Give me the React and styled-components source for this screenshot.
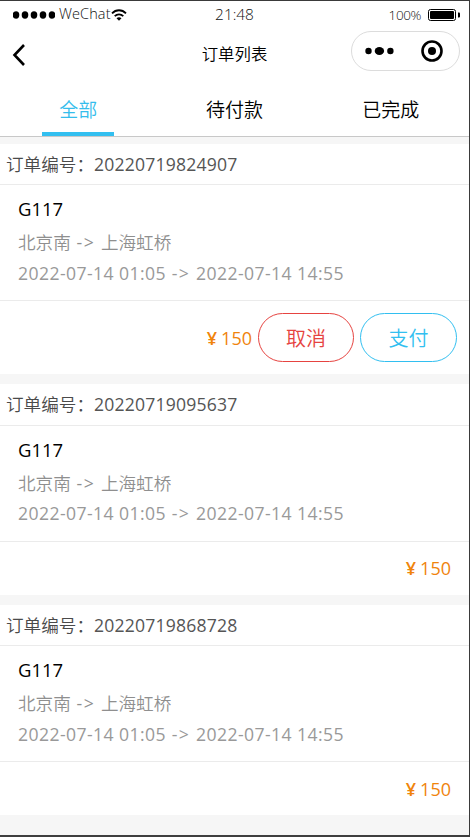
import React, { useState } from 'react';
import styled, { createGlobalStyle } from 'styled-components';

const GlobalStyle = createGlobalStyle`
  * {
    box-sizing: border-box;
  }

  body {
    margin: 0;
    background: #fff;
    font-family: 'Open Sans', 'Noto Sans CJK SC', sans-serif;
  }
`;

const Phone = styled.div`
  display: flex;
  flex-direction: column;
  width: 470px;
  height: 837px;
  overflow: hidden;
  background: #f6f6f6;
  border-top: 1px solid #3a3a3a;
  border-right: 1px solid #3a3a3a;
  border-bottom: 2px solid #3e3e3e;
`;

const StatusBar = styled.div`
  display: grid;
  grid-template-columns: 1fr auto 1fr;
  align-items: center;
  height: 28px;
  padding: 0 9px 0 13px;
  background: #fff;
  color: #111;
  font-weight: 300;
  font-size: 15.4px;
  line-height: 28px;
`;

const Carrier = styled.div`
  display: flex;
  align-items: center;
`;

const CarrierName = styled.span`
  margin: -2px 0 0 4px;
  font-size: 14.5px;
  letter-spacing: 0.1px;
`;

const Time = styled.span`
  margin: -1px 4px 0 0;
`;

const Battery = styled.div`
  display: flex;
  align-items: center;
  justify-content: flex-end;
  gap: 7px;
  font-size: 13.5px;
  letter-spacing: -0.4px;
`;

const NavBar = styled.div`
  display: grid;
  grid-template-columns: 1fr auto 1fr;
  align-items: center;
  height: 53px;
  padding: 0 9px 9px 12px;
  background: #fff;
`;

const NavTitle = styled.div`
  margin: 5px 3px 0 0;
  color: #000;
  font-size: 16.4px;
  font-weight: 350;
  line-height: 24px;
`;

const BackButton = styled.button`
  width: 14px;
  height: 24px;
  margin-top: 8px;
  padding: 0;
  border: none;
  background: none;

  svg {
    display: block;
  }
`;

const Capsule = styled.div`
  display: flex;
  align-items: center;
  justify-content: space-between;
  justify-self: end;
  width: 109px;
  height: 40px;
  padding: 0 16px 0 13px;
  border: 1px solid #dcdcdc;
  border-radius: 20px;
`;

const Tabs = styled.div`
  display: flex;
  flex: none;
  height: 55px;
  background: #fff;
  border-bottom: 1px solid #c8c8c8;
`;

const Tab = styled.div`
  display: flex;
  flex: 1;
  justify-content: center;
  color: ${({ $active }) => ($active ? '#35bdec' : '#000')};
  font-size: 19px;
  font-weight: 350;
  line-height: 56px;
  cursor: pointer;

  span {
    height: 54px;
    padding: 0 17px;
    border-bottom: 4px solid ${({ $active }) => ($active ? '#32bff0' : 'transparent')};
  }
`;

const OrderList = styled.div`
  display: flex;
  flex-direction: column;
  gap: 10px;
  padding-top: 6.9px;
`;

const Card = styled.div`
  background: #fff;
`;

const CardHeader = styled.div`
  display: flex;
  height: 41.3px;
  padding-left: 6px;
  border-bottom: 1px solid #ebebeb;
  color: #4a4a4a;
  font-size: 17.6px;
  font-weight: 350;
  line-height: 40.3px;
`;

const OrderNo = styled.span`
  color: #555;
  font-weight: 400;
  letter-spacing: 0.2px;
`;

const CardBody = styled.div`
  height: 115px;
  padding: 9px 18px 0;
`;

const Train = styled.div`
  height: 33px;
  color: #000;
  font-size: 18.5px;
  line-height: 30px;
`;

const Info = styled.div`
  height: 30.5px;
  color: #999;
  font-size: 17.6px;
  line-height: 30px;
  white-space: nowrap;
`;

const Route = styled(Info)`
  color: #8f8f8f;
  font-weight: 350;
`;

const Schedule = styled(Info)`
  letter-spacing: 0.42px;
`;

const Arrow = styled.span`
  margin: 0 5.7px;
  font-weight: 400;
  letter-spacing: 1.5px;
`;

const CardFooter = styled.div`
  display: flex;
  align-items: center;
  justify-content: flex-end;
  gap: 6px;
  height: ${({ $tall }) => ($tall ? '74.2px' : '54.2px')};
  padding-right: ${({ $tall }) => ($tall ? '12px' : '18px')};
  padding-bottom: 0.4px;
  border-top: 1px solid #ebebeb;
`;

const Price = styled.span`
  display: flex;
  gap: 4px;
  color: #f0840c;
  font-size: 18px;
`;

const Currency = styled.span`
  font-weight: 600;
`;

const Button = styled.button`
  width: ${({ $width }) => $width};
  height: 49px;
  padding: 0;
  border: 1px solid ${({ $color }) => $color};
  border-radius: 25px;
  background: #fff;
  color: ${({ $color }) => $color};
  font-family: inherit;
  font-size: 20px;
  font-weight: 350;
  cursor: pointer;
`;

const tabs = ['全部', '待付款', '已完成'];

const orders = [
  { no: '20220719824907', unpaid: true },
  { no: '20220719095637', unpaid: false },
  { no: '20220719868728', unpaid: false },
];

const SignalDots = () => (
  <svg width="42" height="8" viewBox="0 0 42 8">
    {[3, 12, 21, 30, 39].map((x) => (
      <ellipse key={x} cx={x} cy="4" rx="3.3" ry="3.7" />
    ))}
  </svg>
);

const WifiIcon = () => (
  <svg width="16" height="12" viewBox="0 0 16 12" fill="none" stroke="#000" strokeWidth="1.8">
    <path d="M1 4.3C5 .2 11 .2 15 4.3" />
    <path d="M3.7 7.2c2.5-2.5 6.1-2.5 8.6 0" />
    <path d="M5.5 9.2c1.4-1.2 3.6-1.2 5 0L8 11.8z" fill="#000" stroke="none" />
  </svg>
);

const BatteryIcon = () => (
  <svg width="32" height="12" viewBox="0 0 32 12">
    <rect x="0.5" y="0.5" width="27" height="11" rx="2" fill="none" stroke="#000" />
    <rect x="2" y="2" width="24" height="8" rx="1" />
    <path d="M30 3.5h1q1 0 1 1v3q0 1-1 1h-1z" />
  </svg>
);

const App = () => {
  const [active, setActive] = useState(0);

  return (
    <Phone>
      <GlobalStyle />
      <StatusBar>
        <Carrier>
          <SignalDots />
          <CarrierName>WeChat</CarrierName>
          <WifiIcon />
        </Carrier>
        <Time>21:48</Time>
        <Battery>
          <span>100%</span>
          <BatteryIcon />
        </Battery>
      </StatusBar>
      <NavBar>
        <BackButton>
          <svg width="14" height="24" viewBox="0 0 14 24" fill="none" stroke="#000" strokeWidth="2.6">
            <path d="M12 2L2.5 12L12 22" />
          </svg>
        </BackButton>
        <NavTitle>订单列表</NavTitle>
        <Capsule>
          <svg width="29" height="10" viewBox="0 0 29 10">
            <circle cx="3.5" cy="5" r="3.2" />
            <ellipse cx="14.4" cy="5" rx="4.7" ry="4" />
            <circle cx="25.4" cy="5" r="3.2" />
          </svg>
          <svg width="22" height="22" viewBox="0 0 22 22">
            <circle cx="11" cy="11" r="9.5" fill="none" stroke="#000" strokeWidth="2.6" />
            <circle cx="11" cy="11" r="4" />
          </svg>
        </Capsule>
      </NavBar>
      <Tabs>
        {tabs.map((tab, index) => (
          <Tab key={tab} $active={index === active} onClick={() => setActive(index)}>
            <span>{tab}</span>
          </Tab>
        ))}
      </Tabs>
      <OrderList>
        {orders.map((order) => (
          <Card key={order.no}>
            <CardHeader>
              订单编号：<OrderNo>{order.no}</OrderNo>
            </CardHeader>
            <CardBody>
              <Train>G117</Train>
              <Route>
                北京南<Arrow>-&gt;</Arrow>上海虹桥
              </Route>
              <Schedule>
                2022-07-14 01:05<Arrow>-&gt;</Arrow>2022-07-14 14:55
              </Schedule>
            </CardBody>
            <CardFooter $tall={order.unpaid}>
              <Price>
                <Currency>¥</Currency>
                <span>150</span>
              </Price>
              {order.unpaid && (
                <>
                  <Button $color="#e64340" $width="96px">取消</Button>
                  <Button $color="#32bff0" $width="97px">支付</Button>
                </>
              )}
            </CardFooter>
          </Card>
        ))}
      </OrderList>
    </Phone>
  );
};

export default App;
